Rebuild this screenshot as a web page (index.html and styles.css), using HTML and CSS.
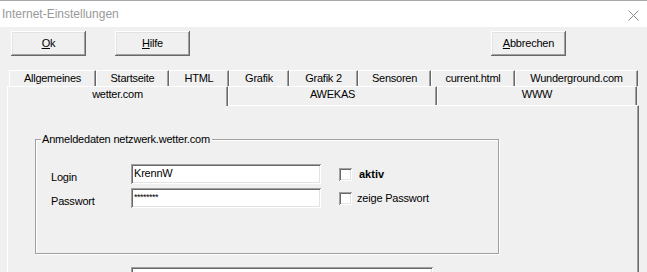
FILE: index.html
```html
<!DOCTYPE html>
<html lang="de">
<head>
<meta charset="utf-8">
<title>Internet-Einstellungen</title>
<link rel="stylesheet" href="styles.css">
</head>
<body>
<div class="window">
  <div class="titlebar">
    <span class="title">Internet-Einstellungen</span>
    <svg class="close" width="11" height="11" viewBox="0 0 11 11"><path d="M0.5 0.5 L10.5 10.5 M10.5 0.5 L0.5 10.5" stroke="#8a8a8a" stroke-width="1" fill="none"/></svg>
  </div>
  <div class="client">
    <div class="buttons">
      <button class="btn"><u>O</u>k</button>
      <button class="btn btn-help"><u>H</u>ilfe</button>
      <button class="btn btn-cancel"><u>A</u>bbrechen</button>
    </div>
    <div class="tabs">
      <div class="tabrow row1">
        <div class="tab t-allg">Allgemeines</div>
        <div class="tab t-start">Startseite</div>
        <div class="tab t-html">HTML</div>
        <div class="tab t-grafik">Grafik</div>
        <div class="tab t-grafik2">Grafik 2</div>
        <div class="tab t-sens">Sensoren</div>
        <div class="tab t-curr">current.html</div>
        <div class="tab t-wu">Wunderground.com</div>
      </div>
      <div class="tabrow row2">
        <div class="tab tab2 selected t-wetter">wetter.com</div>
        <div class="tab tab2 t-awekas">AWEKAS</div>
        <div class="tab tab2 t-www">WWW</div>
      </div>
    </div>
    <div class="panel">
      <div class="group">
        <span class="group-label">Anmeldedaten netzwerk.wetter.com</span>
        <div class="form">
          <span class="lbl">Login</span>
          <div class="input">KrennW</div>
          <label class="check"><span class="box"></span><span class="bold">aktiv</span></label>
          <span class="lbl">Passwort</span>
          <div class="input pw">********</div>
          <label class="check"><span class="box"></span><span class="ctext">zeige Passwort</span></label>
        </div>
      </div>
      <div class="input wide"></div>
    </div>
  </div>
</div>
</body>
</html>
```

FILE: styles.css
```css
* { box-sizing: border-box; }
html, body {
  margin: 0;
  padding: 0;
  width: 647px;
  height: 272px;
  overflow: hidden;
  background: #f0f0f0;
  font-family: "Liberation Sans", Arial, sans-serif;
  font-size: 11px;
  color: #000;
}
.window { width: 647px; height: 272px; overflow: hidden; }
.titlebar {
  height: 27px;
  background: #fff;
  border-top: 1px solid #aaaaaa;
  display: flex;
  align-items: center;
  justify-content: space-between;
  padding: 0 8px 0 2px;
}
.title {
  font-size: 12px;
  color: #999999;
  line-height: 16px;
  margin-top: -1px;
}
.close { margin-top: 3px; }
.client { padding-top: 4px; }
.buttons {
  display: flex;
  padding-left: 11px;
  height: 25px;
}
.btn {
  width: 75px;
  height: 25px;
  margin: 0;
  padding: 0 0 2px 0;
  border: none;
  background: #f0f0f0;
  font-family: "Liberation Sans", Arial, sans-serif;
  font-size: 11px;
  color: #000;
  letter-spacing: -0.2px;
  box-shadow: inset -1px -1px #696969, inset 1px 1px #ffffff, inset -2px -2px #a0a0a0, inset 2px 2px #e3e3e3;
}
.btn-help { margin-left: 29px; }
.btn-cancel { margin-left: 301px; }
.tabs { margin-top: 14px; }
.tabrow { display: flex; }
.row1 { padding-left: 9px; height: 16px; }
.row2 { padding-left: 7px; height: 19px; }
.tab {
  height: 16px;
  border-top: 1px solid #fff;
  border-left: 1px solid #fff;
  border-right: 1px solid #696969;
  box-shadow: inset -1px 0 #a0a0a0;
  text-align: center;
  line-height: 15px;
  letter-spacing: -0.25px;
  background: #f0f0f0;
}
.tab2 { height: 19px; }
.selected {
  position: relative;
  z-index: 1;
  height: 20px;
}
.t-allg { width: 87px; }
.t-start { width: 73px; }
.t-html { width: 60px; }
.t-grafik { width: 60px; }
.t-grafik2 { width: 69px; }
.t-sens { width: 73px; }
.t-curr { width: 84px; }
.t-wu { width: 123px; }
.t-wetter { width: 221px; }
.t-awekas { width: 209px; }
.t-www { width: 200px; }
.panel {
  margin-left: 7px;
  width: 632px;
  height: 167px;
  overflow: hidden;
  border-top: 1px solid #fff;
  border-left: 1px solid #fff;
  border-right: 1px solid #696969;
  box-shadow: inset -1px 0 #a0a0a0;
  padding: 33px 0 0 27px;
}
.group {
  position: relative;
  width: 464px;
  height: 115px;
  border: 1px solid #a0a0a0;
  box-shadow: 1px 1px 0 #fff, inset 1px 1px 0 #fff;
  padding: 24px 0 0 15px;
}
.group-label {
  position: absolute;
  top: -8px;
  left: 5px;
  padding: 0 2px 0 1px;
  background: #f0f0f0;
  line-height: 15px;
  letter-spacing: -0.2px;
}
.form {
  display: grid;
  grid-template-columns: 80px 190px auto;
  grid-auto-rows: 20px;
  row-gap: 4px;
}
.lbl {
  line-height: 20px;
  padding-top: 3px;
  letter-spacing: -0.2px;
}
.input {
  background: #fff;
  height: 20px;
  box-shadow: inset 1px 1px #a0a0a0, inset -1px -1px #fff, inset 2px 2px #696969, inset -2px -2px #e3e3e3;
  padding: 2px 0 0 3px;
  line-height: 15px;
  letter-spacing: -0.2px;
}
.pw { font-size: 9px; line-height: 12px; letter-spacing: -0.5px; padding-top: 3px; }
.check {
  display: flex;
  align-items: center;
  margin-left: 18px;
  gap: 7px;
}
.box {
  width: 13px;
  height: 13px;
  background: #fff;
  box-shadow: inset 1px 1px #a0a0a0, inset -1px -1px #fff, inset 2px 2px #696969, inset -2px -2px #e3e3e3;
  margin-top: 1px;
}
.bold { font-weight: bold; letter-spacing: 0; }
.ctext { margin-left: -2px; letter-spacing: -0.2px; }
.wide {
  width: 302px;
  height: 10px;
  margin: 13px 0 0 96px;
}
```
